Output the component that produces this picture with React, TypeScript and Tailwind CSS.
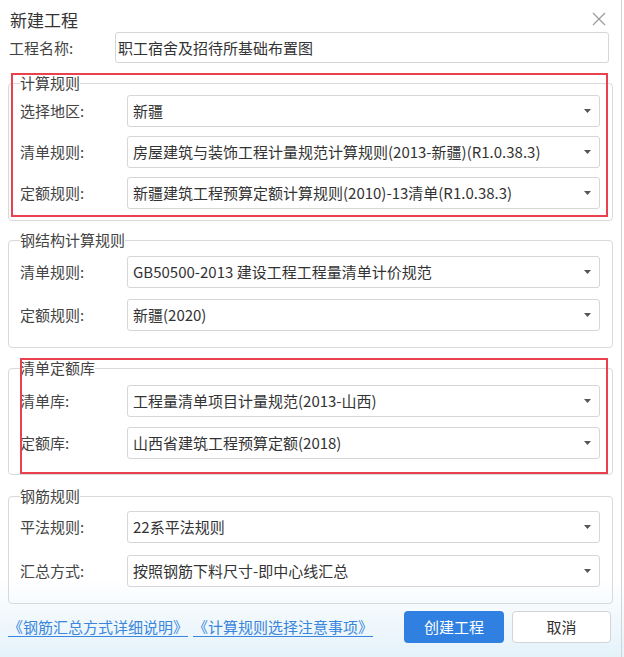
import React from "react";

const font = { fontFamily: '"Noto Sans CJK SC", "Noto Sans", sans-serif' };

function Arrow() {
  return (
    <svg width="7" height="4" viewBox="0 0 7 4" className="shrink-0">
      <path d="M0 0 L7 0 L3.5 4 Z" fill="#555" />
    </svg>
  );
}

function Select({ value }: { value: string }) {
  return (
    <div className="flex items-center justify-between w-[473px] h-[32px] border border-[#d6d6d6] rounded-[3px] bg-white pl-[5px] pr-[8px]">
      <span className="text-[15px] leading-[20px] text-[#333] whitespace-nowrap">{value}</span>
      <Arrow />
    </div>
  );
}

function Row({ label, value }: { label: string; value: string }) {
  return (
    <div className="flex items-center h-[32px]">
      <div className="w-[107px] text-[15px] leading-[20px] text-[#444] whitespace-nowrap">{label}</div>
      <Select value={value} />
    </div>
  );
}

function Group({
  title,
  className,
  children,
}: {
  title: string;
  className: string;
  children: React.ReactNode;
}) {
  return (
    <fieldset
      className={`ml-[8px] w-[605px] border border-[#d9d9d9] rounded-[4px] pl-[11px] pr-[11px] ${className}`}
    >
      <legend className="text-[15px] leading-[16px] text-[#444] px-0">{title}</legend>
      {children}
    </fieldset>
  );
}

export default function App() {
  return (
    <div
      className="relative w-[624px] h-[657px] overflow-hidden bg-[linear-gradient(to_bottom,#ffffff_88%,#e4f2fa_100%)]"
      style={font}
    >
      <div className="w-[622px] h-[657px] border-r border-[#d4d4d4]">
        {/* header */}
        <div className="flex items-start justify-between h-[32px] pt-[9px] pl-[10px] pr-[15px]">
          <span className="text-[17px] leading-[21px] text-[#333]">新建工程</span>
          <svg width="14" height="14" viewBox="0 0 14 14" className="mt-[3px]">
            <path d="M1 1 L13 13 M13 1 L1 13" stroke="#9a9a9a" strokeWidth="1.2" />
          </svg>
        </div>

        {/* project name */}
        <div className="flex items-center h-[31px]">
          <div className="w-[115px] pl-[9px] text-[15px] leading-[20px] text-[#444]">工程名称:</div>
          <div className="flex items-center w-[494px] h-[31px] border border-[#d6d6d6] rounded-[3px] bg-white pl-[2px]">
            <span className="text-[15px] leading-[20px] text-[#333]">职工宿舍及招待所基础布置图</span>
          </div>
        </div>

        <Group title="计算规则" className="mt-[12px] pt-[4px] pb-[11px]">
          <div className="flex flex-col gap-[9px]">
            <Row label="选择地区:" value="新疆" />
            <Row label="清单规则:" value="房屋建筑与装饰工程计量规范计算规则(2013-新疆)(R1.0.38.3)" />
            <Row label="定额规则:" value="新疆建筑工程预算定额计算规则(2010)-13清单(R1.0.38.3)" />
          </div>
        </Group>

        <Group title="钢结构计算规则" className="mt-[11px] pt-[8px] pb-[16px]">
          <div className="flex flex-col gap-[11px]">
            <Row label="清单规则:" value="GB50500-2013 建设工程工程量清单计价规范" />
            <Row label="定额规则:" value="新疆(2020)" />
          </div>
        </Group>

        <Group title="清单定额库" className="mt-[12px] pt-[9px] pb-[15px]">
          <div className="flex flex-col gap-[10px]">
            <Row label="清单库:" value="工程量清单项目计量规范(2013-山西)" />
            <Row label="定额库:" value="山西省建筑工程预算定额(2018)" />
          </div>
        </Group>

        <Group title="钢筋规则" className="mt-[13px] pt-[7px] pb-[16px]">
          <div className="flex flex-col gap-[12px]">
            <Row label="平法规则:" value="22系平法规则" />
            <Row label="汇总方式:" value="按照钢筋下料尺寸-即中心线汇总" />
          </div>
        </Group>

        {/* footer */}
        <div className="flex items-center mt-[7px] pl-[8px] pr-[10px]">
          <span className="text-[15px] leading-[20px] text-[#3a86dc] underline underline-offset-[3px] whitespace-nowrap">
            《钢筋汇总方式详细说明》
          </span>
          <span className="ml-[5px] text-[15px] leading-[20px] text-[#3a86dc] underline underline-offset-[3px] whitespace-nowrap">
            《计算规则选择注意事项》
          </span>
          <div className="flex-1" />
          <button className="w-[100px] h-[32px] rounded-[4px] bg-[#2f80e0] text-white text-[15px] leading-[20px]">
            创建工程
          </button>
          <button className="ml-[8px] w-[99px] h-[32px] rounded-[4px] bg-white border border-[#d4d4d4] text-[#333] text-[15px] leading-[20px]">
            取消
          </button>
        </div>
      </div>

      {/* red annotation boxes */}
      <div className="absolute left-[11px] top-[73px] w-[597px] h-[144px] border-[2px] border-[#e9414e] pointer-events-none" />
      <div className="absolute left-[20px] top-[358px] w-[588px] h-[116px] border-[2px] border-[#e9414e] pointer-events-none" />
    </div>
  );
}
